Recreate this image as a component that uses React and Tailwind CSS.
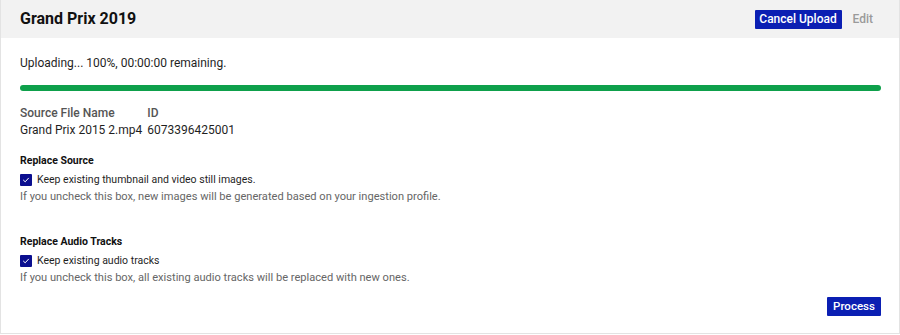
export default function App() {
  const font = { fontFamily: 'Roboto, "Liberation Sans", sans-serif' };
  return (
    <div className="w-[900px] h-[335px] bg-white text-[#1f1f1f]" style={font}>
      <div className="h-[334px] border border-[#e3e3e3] border-t-0 flex flex-col">
        <div className="h-[38px] bg-[#f2f2f2] flex items-center pl-[19px] pr-[26px] shrink-0">
          <h1 className="text-[16px] font-bold text-[#111] flex-1">Grand Prix 2019</h1>
          <button className="h-[19px] w-[87px] bg-[#0b1fb3] text-white text-[12px] font-medium rounded-[1px] mr-[11px]">Cancel Upload</button>
          <span className="text-[12px] font-medium text-[#9a9a9a]">Edit</span>
        </div>
        <div className="flex-1 flex flex-col px-[19px] pr-[18px]">
          <p className="text-[12px] mt-[16px] leading-[18px]">Uploading... 100%, 00:00:00 remaining.</p>
          <div className="mt-[13px] h-[6px] rounded-full bg-[#0ea04b]" />
          <div className="mt-[14px] flex gap-[5px] text-[12px] leading-[17px]">
            <div className="flex flex-col">
              <span className="font-medium text-[#555]">Source File Name</span>
              <span>Grand Prix 2015 2.mp4</span>
            </div>
            <div className="flex flex-col">
              <span className="font-medium text-[#555]">ID</span>
              <span>6073396425001</span>
            </div>
          </div>
          <Section
            className="mt-[14px]"
            title="Replace Source"
            label="Keep existing thumbnail and video still images."
            help="If you uncheck this box, new images will be generated based on your ingestion profile."
          />
          <Section
            className="mt-[29px]"
            title="Replace Audio Tracks"
            label="Keep existing audio tracks"
            help="If you uncheck this box, all existing audio tracks will be replaced with new ones."
          />
          <div className="flex justify-end mt-auto mb-[17px]">
            <button className="h-[19px] w-[54px] bg-[#0b1fb3] text-white text-[11.5px] font-medium rounded-[1px]">Process</button>
          </div>
        </div>
      </div>
    </div>
  );
}

function Section({ className, title, label, help }) {
  return (
    <div className={className}>
      <div className="text-[10.5px] font-bold leading-[15px] text-[#111]">{title}</div>
      <div className="mt-[4px] flex items-center gap-[5px]">
        <span className="w-[12px] h-[12px] bg-[#0b0f8f] rounded-[1px] flex items-center justify-center">
          <svg width="8" height="8" viewBox="0 0 8 8" fill="none">
            <path d="M1.5 4.2 L3.2 5.8 L6.5 2.2" stroke="white" strokeWidth="1" strokeLinecap="round" strokeLinejoin="round" />
          </svg>
        </span>
        <span className="text-[10.5px] leading-[15px]">{label}</span>
      </div>
      <div className="text-[11.1px] leading-[17px] text-[#666] mt-[1px]">{help}</div>
    </div>
  );
}
